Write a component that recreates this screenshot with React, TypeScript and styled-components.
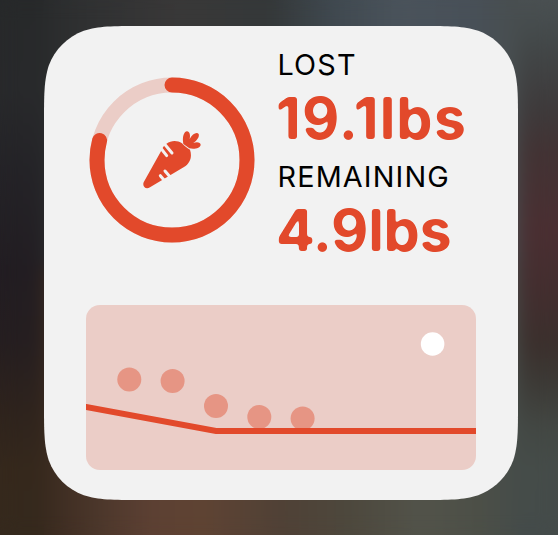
import React from "react";
import styled, { createGlobalStyle } from "styled-components";

const ACCENT = "#e2492b";
const TINT = "#ebcdc7";
const SURFACE = "#f2f2f2";

const GlobalStyle = createGlobalStyle`
  body { margin: 0; }
  * { box-sizing: border-box; }
`;

const Wallpaper = styled.main`
  position: relative;
  width: 558px;
  height: 535px;
  padding: 26px 40px 35px 44px;
  overflow: hidden;
  background:
    linear-gradient(to bottom, #27292a 0, #28292b 90px, #242327 170px, #221d22 270px, #251e20 340px, #2e231d 410px, #35281c 470px, #35291d 535px)
      0 0 / 44px 100% no-repeat,
    linear-gradient(to bottom, #4a5052 0, #454b4c 30px, #414445 60px, #3e3a3b 110px, #423334 150px, #4a2f32 230px, #432e2f 290px, #3b302d 345px, #3c3935 380px, #434844 430px, #454c49 470px, #444b4a 535px)
      100% 0 / 40px 100% no-repeat,
    linear-gradient(to right, #27292a 0, #292b2c 40px, #303132 90px, #393838 180px, #343839 270px, #404950 335px, #4a535b 400px, #485058 470px, #484e4f 518px)
      0 0 / 100% 50% no-repeat,
    linear-gradient(to right, #35291d 0, #38291e 40px, #4c372b 100px, #5c4033 150px, #5f4333 200px, #4f4136 285px, #4d483d 350px, #52534a 420px, #4c4f47 480px, #454c4a 520px)
      0 100% / 100% 50% no-repeat;

  &::before {
    content: "";
    position: absolute;
    inset: 0;
    background: inherit;
    filter: blur(9px);
  }
`;

const r = 63;
const n = (v: number) => v.toFixed(2);
const cardPath = (w: number) => {
  const a = 1.52866 * r, b = 1.08849 * r, c = 0.86841 * r;
  const d = 0.63149 * r, e = 0.07491 * r, f = 0.37282 * r, g = 0.16906 * r;
  const p = (x: number, y: number) => `${n(x)} ${n(y)}`;
  return [
    `M${p(a, 0)} L${p(w - a, 0)}`,
    `C${p(w - b, 0)} ${p(w - c, 0)} ${p(w - d, e)}`,
    `C${p(w - f, g)} ${p(w - g, f)} ${p(w - e, d)}`,
    `C${p(w, c)} ${p(w, b)} ${p(w, a)} L${p(w, w - a)}`,
    `C${p(w, w - b)} ${p(w, w - c)} ${p(w - e, w - d)}`,
    `C${p(w - g, w - f)} ${p(w - f, w - g)} ${p(w - d, w - e)}`,
    `C${p(w - c, w)} ${p(w - b, w)} ${p(w - a, w)} L${p(a, w)}`,
    `C${p(b, w)} ${p(c, w)} ${p(d, w - e)}`,
    `C${p(f, w - g)} ${p(g, w - f)} ${p(e, w - d)}`,
    `C${p(0, w - c)} ${p(0, w - b)} ${p(0, w - a)} L${p(0, a)}`,
    `C${p(0, b)} ${p(0, c)} ${p(e, d)}`,
    `C${p(g, f)} ${p(f, g)} ${p(d, e)}`,
    `C${p(c, 0)} ${p(b, 0)} ${p(a, 0)} Z`,
  ].join(" ");
};

const Card = styled.section`
  position: relative;
  display: flex;
  flex-direction: column;
  justify-content: space-between;
  width: 474px;
  height: 474px;
  padding: 22px 42px 30px;
  background: ${SURFACE};
  clip-path: path("${cardPath(474)}");
`;

const Summary = styled.div`
  display: flex;
  gap: 19px;
  align-items: flex-start;
`;

const RingFrame = styled.div`
  display: grid;
  flex: none;
  width: 170px;
  height: 170px;
  margin-top: 27px;
  margin-left: 1px;
  place-items: center;
  & > * { grid-area: 1 / 1; }
`;

const Stats = styled.dl`
  margin: 0;
  font-family: Inter, "Liberation Sans", sans-serif;
  white-space: nowrap;
`;

const StatLabel = styled.dt`
  height: 34px;
  padding-left: 1.5px;
  font-size: 28.8px;
  line-height: 34px;
  letter-spacing: 1.15px;
  color: #000;
`;

const StatValue = styled.dd<{ $spacing: number }>`
  height: 78px;
  margin: 0;
  font-size: 57.5px;
  font-weight: 660;
  line-height: 72px;
  letter-spacing: ${(p) => p.$spacing}px;
  color: ${ACCENT};
  filter: url(#round-corners);
`;

const Definitions = styled.svg`
  position: absolute;
`;

const Chart = styled.svg`
  display: block;
  width: 390px;
  height: 165px;
  border-radius: 14px;
  background: ${TINT};
`;

/* Blurring and re-sharpening the alpha edge rounds off the letter corners. */
function RoundCornersFilter() {
  return (
    <Definitions width="0" height="0" aria-hidden="true">
      <filter id="round-corners" colorInterpolationFilters="sRGB">
        <feGaussianBlur stdDeviation="1.75" />
        <feComponentTransfer>
          <feFuncA type="linear" slope="4.2" intercept="-1.6" />
        </feComponentTransfer>
      </filter>
    </Definitions>
  );
}

function Carrot() {
  return (
    <svg width="58" height="58" viewBox="40 35 174 174" aria-hidden="true">
      <g fill={ACCENT}>
        <path d="M42 189 L94 96 C104 66 136 57 157 72 C161 78 172 86 181 91 C188 112 182 131 163 143 L61 204 C49 212 37 202 42 189Z" />
        <path d="M161 74 C157 53 163 36 172 36 C180 37 183 48 180 59 C188 43 202 36 207 44 C210 52 202 64 191 71 C202 66 213 69 213 76 C212 86 195 91 179 87Z" />
      </g>
      <g stroke={SURFACE} strokeWidth="9" strokeLinecap="round">
        <path d="M93 86 L111 109 M107 77 L127 101 M106 155 L124 176 M92 169 L108 188" />
      </g>
    </svg>
  );
}

function ProgressRing({ value }: { value: number }) {
  return (
    <RingFrame>
      <svg width="170" height="170" viewBox="-85 -85 170 170" fill="none" strokeWidth="15">
        <circle r="75" stroke={TINT} />
        <circle
          r="75"
          stroke={ACCENT}
          strokeLinecap="round"
          pathLength="100"
          strokeDasharray={`${value} 100`}
          transform="rotate(-90)"
        />
      </svg>
      <Carrot />
    </RingFrame>
  );
}

const weights = [
  [43.3, 74.4], [86.6, 76.1], [130, 101], [173.3, 111.9], [216.6, 113.4],
];

export default function App() {
  return (
    <>
      <GlobalStyle />
      <RoundCornersFilter />
      <Wallpaper>
        <Card>
          <Summary>
            <ProgressRing value={79.2} />
            <Stats>
              <StatLabel>LOST</StatLabel>
              <StatValue $spacing={1.1}>19.1lbs</StatValue>
              <StatLabel>REMAINING</StatLabel>
              <StatValue $spacing={-0.2}>4.9lbs</StatValue>
            </Stats>
          </Summary>
          <Chart viewBox="0 0 390 165">
            {weights.map(([x, y]) => (
              <circle key={x} cx={x} cy={y} r="12" fill="#e69584" />
            ))}
            <circle cx="346.6" cy="39" r="11.8" fill="#fff" />
            <path d="M-6 100.9 L0 102 L130 126 H396" fill="none" stroke={ACCENT} strokeWidth="6" />
          </Chart>
        </Card>
      </Wallpaper>
    </>
  );
}
